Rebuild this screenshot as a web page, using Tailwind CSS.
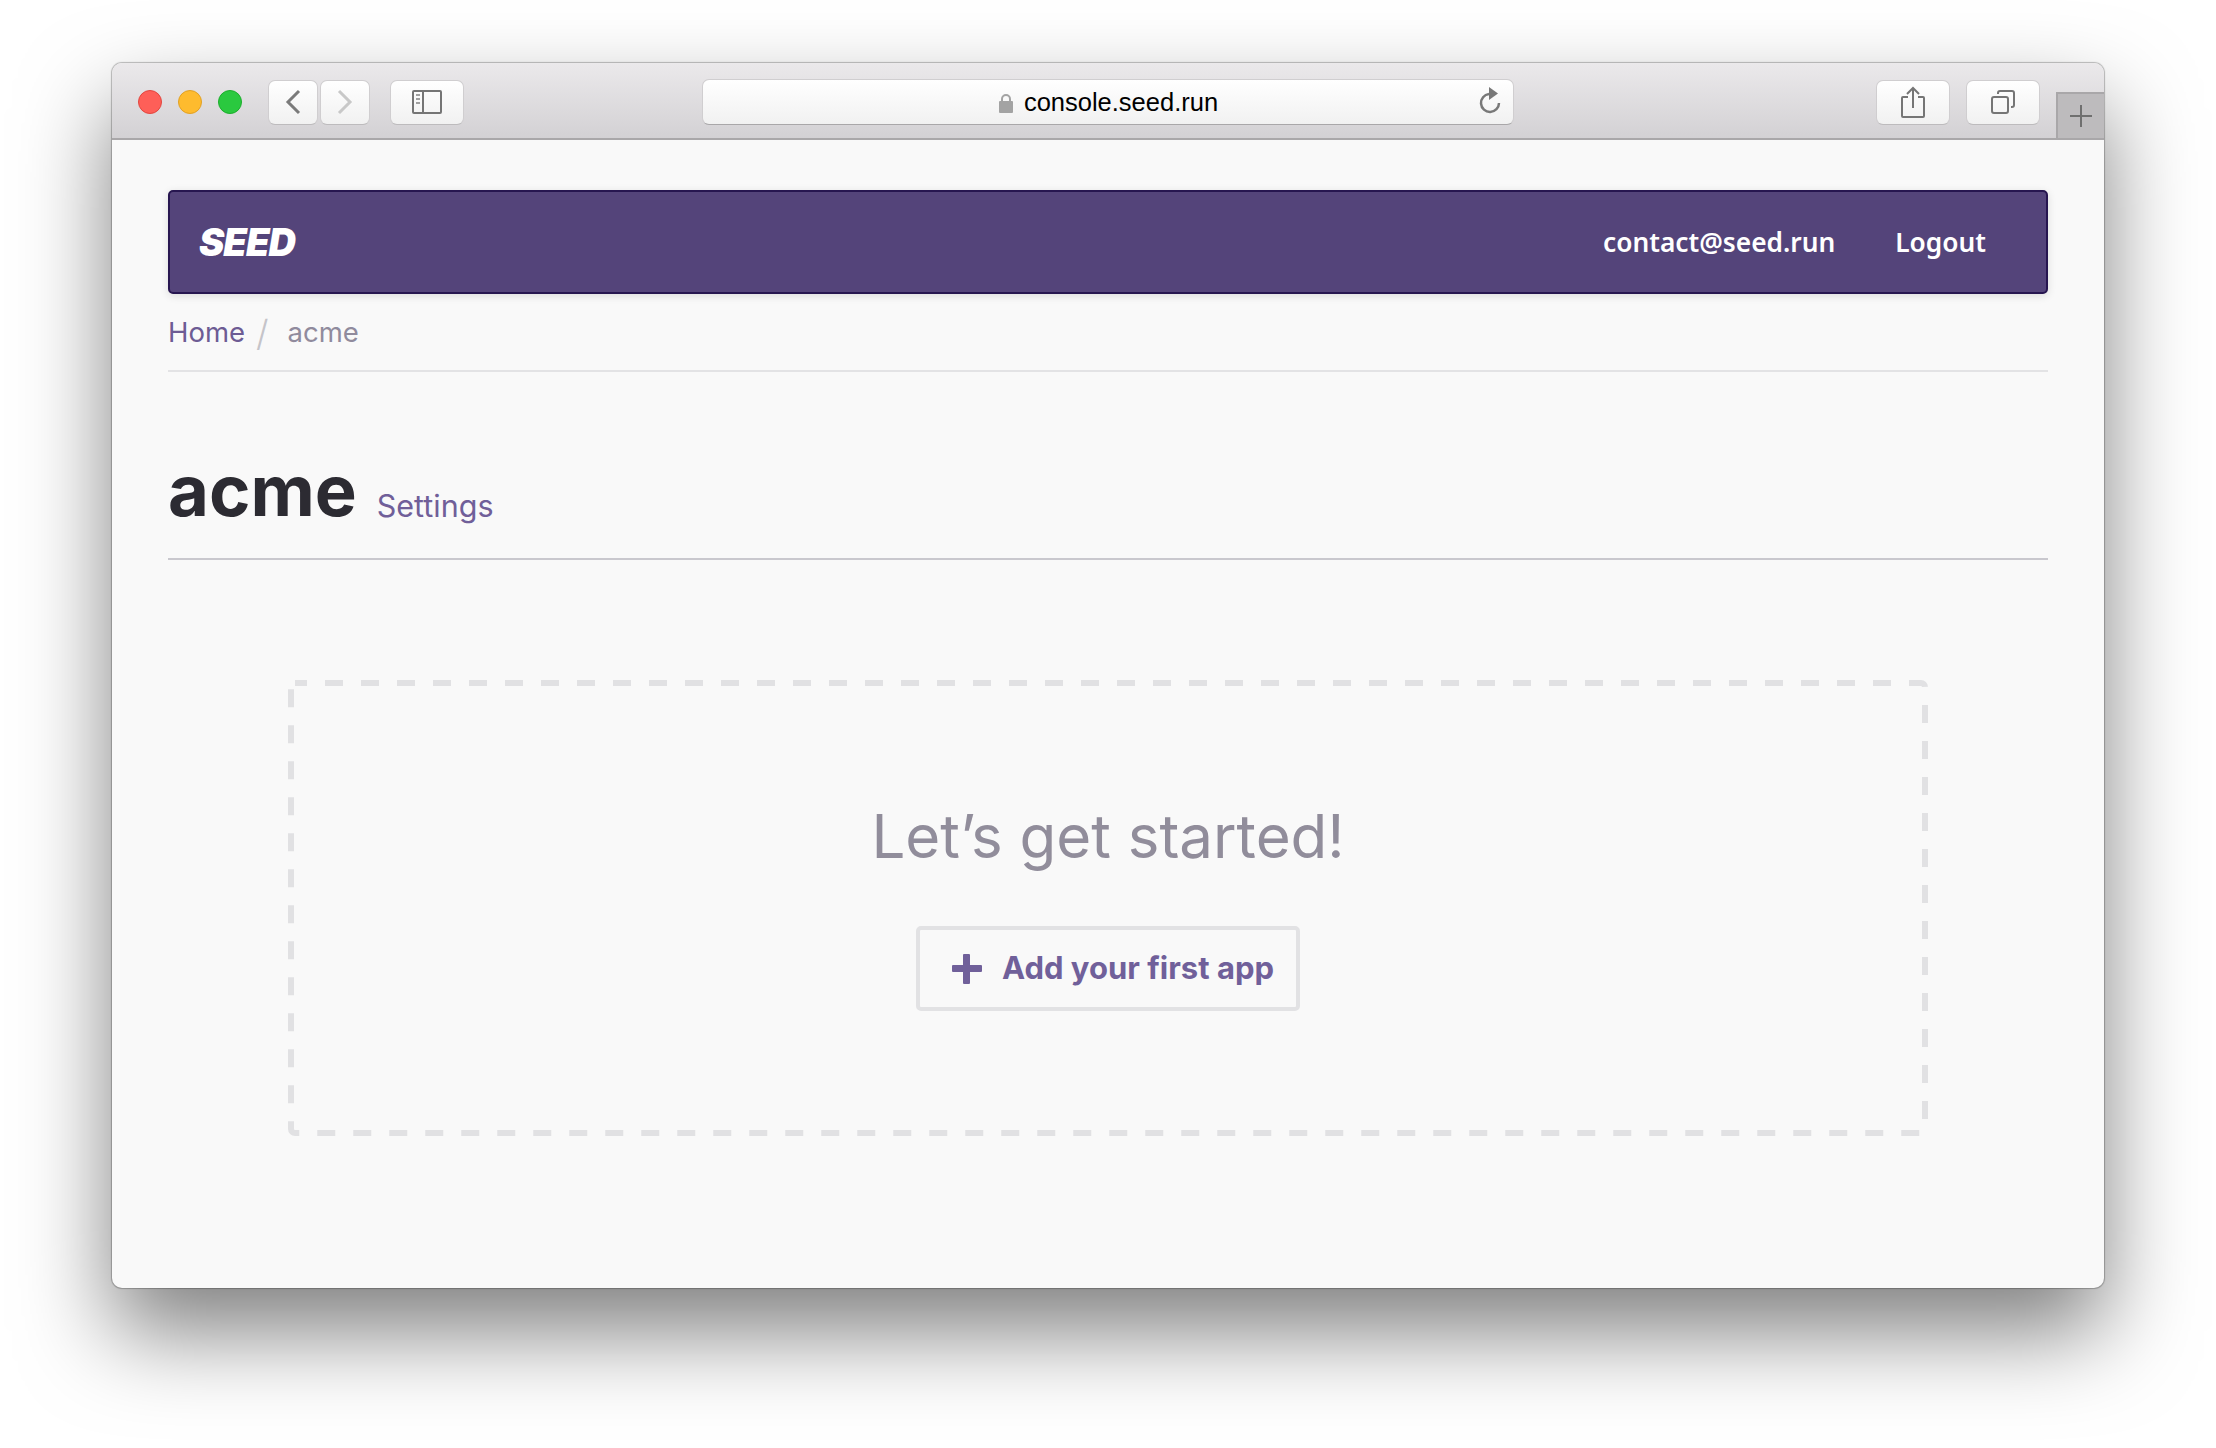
<!DOCTYPE html>
<html lang="en">
<head>
    <meta charset="UTF-8">
    <title>console.seed.run</title>
    <script src="https://cdn.jsdelivr.net/npm/@tailwindcss/browser@4"></script>
</head>
<body class="bg-white h-[1448px] overflow-hidden font-['Inter',sans-serif]">
    <div class="pt-[63px] pl-[112px]">
        <div class="relative w-[1992px] h-[1225px] rounded-[10px] bg-[#f9f9f9] shadow-[0_44px_90px_rgba(0,0,0,0.5),0_0_1px_1px_rgba(0,0,0,0.25)]">
            <!-- browser toolbar -->
            <div class="relative flex items-center h-[77px] pt-[3px] pl-[26px] rounded-t-[10px] bg-gradient-to-b from-[#ebe9eb] to-[#d3d1d4] border-b-2 border-[#a9a7a9]">
                <div class="flex gap-4">
                    <span class="w-6 h-6 rounded-full bg-[#fe5f58] border border-[#e2463f]"></span>
                    <span class="w-6 h-6 rounded-full bg-[#febb2e] border border-[#e1a124]"></span>
                    <span class="w-6 h-6 rounded-full bg-[#2ac93f] border border-[#1cae2c]"></span>
                </div>
                <div class="flex gap-[2px] ml-[26px]">
                    <button class="flex items-center justify-center w-[50px] h-[45px] rounded-[7px] bg-gradient-to-b from-white to-[#f1f1f1] border border-[#d0ced0] border-b-[#bdbbbd]">
                        <svg width="16" height="26" viewBox="0 0 16 26" fill="none" stroke="#7a7a7a" stroke-width="3"><path d="M14 2 3 13l11 11"/></svg>
                    </button>
                    <button class="flex items-center justify-center w-[50px] h-[45px] rounded-[7px] bg-gradient-to-b from-white to-[#f1f1f1] border border-[#d0ced0] border-b-[#bdbbbd]">
                        <svg width="16" height="26" viewBox="0 0 16 26" fill="none" stroke="#c8c8c8" stroke-width="3"><path d="M2 2l11 11L2 24"/></svg>
                    </button>
                </div>
                <button class="flex items-center justify-center w-[74px] h-[45px] ml-[20px] rounded-[7px] bg-gradient-to-b from-white to-[#f1f1f1] border border-[#d0ced0] border-b-[#bdbbbd]">
                    <svg width="30" height="24" viewBox="0 0 30 24" fill="none" stroke="#757575" stroke-width="2"><rect x="1" y="1" width="28" height="22" rx="1"/><path d="M11 1v22"/><path d="M4 5h4M4 9h4M4 13h4" stroke="#a0a0a0"/></svg>
                </button>
                <div class="relative flex items-center justify-center w-[812px] h-[46px] ml-[238px] pt-[2px] rounded-[7px] bg-gradient-to-b from-white to-[#f1f1f1] border border-[#d0ced0] border-b-[#a9a7a9]">
                    <svg width="16" height="20" viewBox="0 0 16 20" class="mr-[10px]"><path d="M4 9V6a4 4 0 0 1 8 0v3" fill="none" stroke="#a3a3a3" stroke-width="2"/><rect x="1" y="8" width="14" height="12" rx="1" fill="#a3a3a3"/></svg>
                    <span class="text-[25.500px] leading-none text-black font-['Liberation_Sans',sans-serif]">console.seed.run</span>
                    <svg width="24" height="28" viewBox="0 0 24 28" fill="none" class="absolute right-[11px] top-[7px]"><path d="M11 7a9 9 0 1 0 10 9" stroke="#787878" stroke-width="2.500"/><path d="M11 0l9 6.500-9 6.500z" fill="#787878"/></svg>
                </div>
                <button class="flex items-center justify-center w-[74px] h-[45px] ml-[362px] rounded-[7px] bg-gradient-to-b from-white to-[#f1f1f1] border border-[#d0ced0] border-b-[#bdbbbd]">
                    <svg width="24" height="32" viewBox="0 0 24 32" fill="none" stroke="#757575" stroke-width="2"><path d="M7 11H2a1 1 0 0 0-1 1v18a1 1 0 0 0 1 1h20a1 1 0 0 0 1-1V12a1 1 0 0 0-1-1h-5"/><path d="M12 22V2M6 8l6-6 6 6"/></svg>
                </button>
                <button class="flex items-center justify-center w-[74px] h-[45px] ml-[16px] rounded-[7px] bg-gradient-to-b from-white to-[#f1f1f1] border border-[#d0ced0] border-b-[#bdbbbd]">
                    <svg width="24" height="24" viewBox="0 0 24 24" fill="none" stroke="#757575" stroke-width="2"><rect x="1" y="7" width="16" height="16" rx="2"/><path d="M7 4V3a2 2 0 0 1 2-2h12a2 2 0 0 1 2 2v12a2 2 0 0 1-2 2h-1"/></svg>
                </button>
                <div class="absolute right-0 bottom-[-2px] flex items-center justify-center w-[48px] h-[48px] bg-[#bdbbbd] border-2 border-r-0 border-[#a9a7a9]">
                    <svg width="22" height="22" viewBox="0 0 22 22" stroke="#6f6f6f" stroke-width="2"><path d="M11 0v22M0 11h22"/></svg>
                </div>
            </div>

            <!-- page -->
            <div class="px-14 pt-[50px]">
                <nav class="flex items-center justify-between h-[104px] pl-[29px] pr-[60px] rounded-[5px] bg-[#54447a] border-2 border-[#271650] shadow-[0_2px_8px_rgba(0,0,0,0.12)]">
                    <span class="text-[38px] leading-none font-black italic tracking-[-1px] text-white">SEED</span>
                    <div class="flex items-center gap-[60px] pt-[2px] text-[26.300px] font-semibold text-white font-['Noto_Sans',sans-serif]">
                        <a>contact@seed.run</a>
                        <a>Logout</a>
                    </div>
                </nav>

                <div class="flex items-center h-[78px] pt-[2px] border-b-2 border-[#e3e3e5] text-[27.500px]">
                    <a class="text-[#6d5c94]">Home</a>
                    <span class="ml-[11px] text-[36px] leading-none font-light text-[#c5c4c9]">/</span>
                    <span class="ml-[19px] text-[#908b9d]">acme</span>
                </div>

                <div class="flex items-baseline h-[188px] pt-[84px] border-b-2 border-[#c9c8ce]">
                    <h1 class="text-[70.500px] leading-none font-bold text-[#2c2b32]">acme</h1>
                    <a class="relative top-[1px] ml-[20px] text-[30.500px] leading-none text-[#705f99]">Settings</a>
                </div>

                <div class="relative flex flex-col items-center w-[1640px] h-[456px] mt-[120px] mx-auto pt-[126px]">
                    <svg width="1640" height="456" fill="none" class="absolute inset-0"><rect x="3" y="3" width="1634" height="450" rx="4" stroke="#e1e1e3" stroke-width="6" stroke-dasharray="18 18" stroke-dashoffset="6"/></svg>
                    <h2 class="text-[60px] leading-none text-[#918d9b]">Let’s get started!</h2>
                    <button class="flex items-center justify-center w-[384px] h-[85px] mt-[60px] pl-[10px] rounded-[5px] border-4 border-[#e2e2e4] text-[31px] font-bold text-[#70609a]">
                        <svg width="30" height="30" viewBox="0 0 30 30" fill="#70609a" class="mr-[20px]"><path d="M11 1a1 1 0 0 1 1-1h5a1 1 0 0 1 1 1v10h11a1 1 0 0 1 1 1v5a1 1 0 0 1-1 1H18v11a1 1 0 0 1-1 1h-5a1 1 0 0 1-1-1V18H1a1 1 0 0 1-1-1v-5a1 1 0 0 1 1-1h10z"/></svg>
                        Add your first app
                    </button>
                </div>
            </div>
        </div>
    </div>
</body>
</html>
